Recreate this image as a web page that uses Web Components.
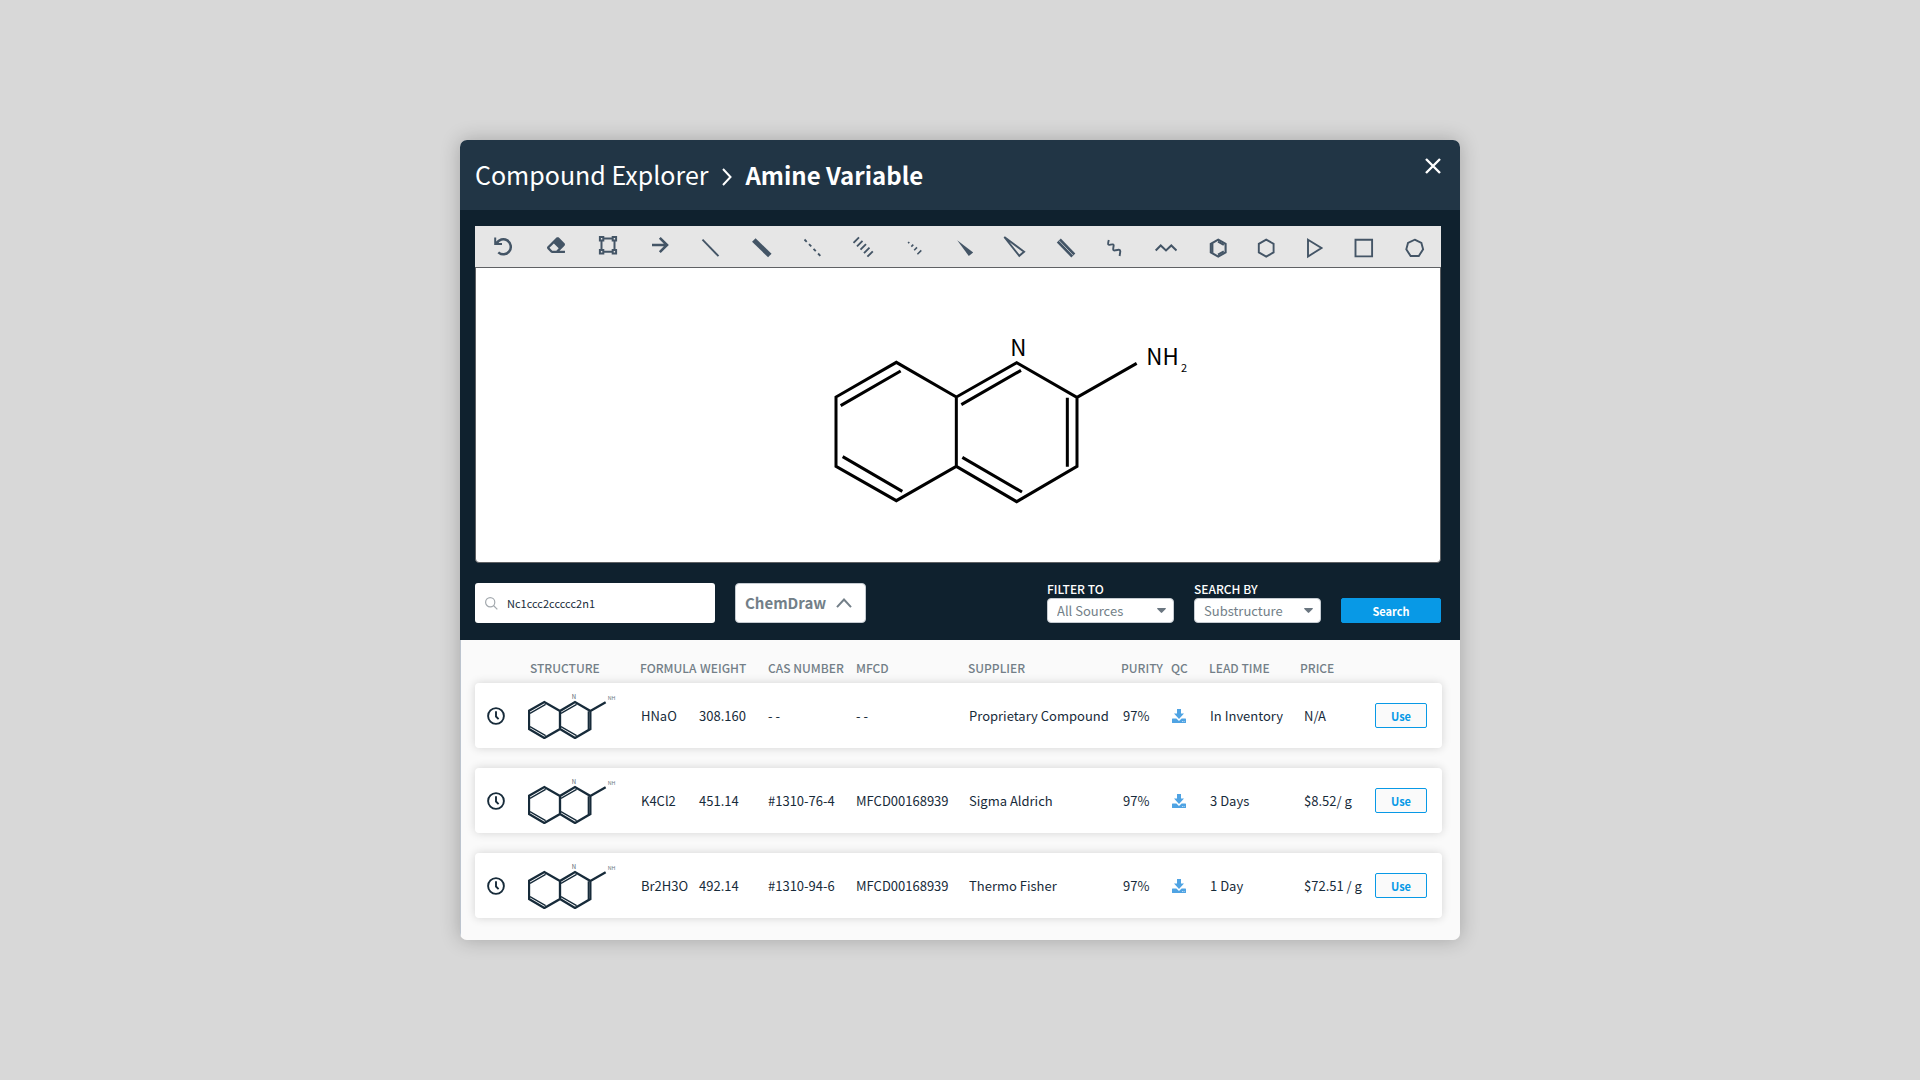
<!DOCTYPE html>
<html lang="en">
<head>
<meta charset="utf-8">
<title>Compound Explorer</title>
<style>
  body {
    margin: 0;
    min-height: 100vh;
    display: grid;
    place-items: center;
    background: #d8d8d8;
    color: #172b3a;
    font: 12px/16px "Noto Sans CJK SC", "Noto Sans", sans-serif;
    --navy: #0f212e;
    --slate: #213545;
    --grey: #737f88;
    --blue: #0899e6;
    --tool: #445566;
  }
</style>
</head>
<body>
<explorer-dialog>
  <dialog-header slot="header" section="Compound Explorer">Amine Variable</dialog-header>
  <molecule-editor slot="workspace"></molecule-editor>
  <search-bar slot="workspace">
    <structure-input value="Nc1ccc2ccccc2n1"></structure-input>
    <format-toggle>ChemDraw</format-toggle>
    <select-field slot="filters" label="FILTER TO" options="All Sources,In Inventory"></select-field>
    <select-field slot="filters" label="SEARCH BY" options="Substructure,Exact Match"></select-field>
    <action-button slot="filters" kind="solid">Search</action-button>
  </search-bar>
  <compound-results slot="results"></compound-results>
</explorer-dialog>

<script>
const define = (name, html, setup) => {
  const template = document.createElement('template');
  template.innerHTML = html;
  customElements.define(name, class extends HTMLElement {
    connectedCallback() {
      if (this.shadowRoot) return;
      const root = this.attachShadow({ mode: 'open' });
      root.append(template.content.cloneNode(true));
      if (setup) setup(this, root);
    }
  });
};

define('explorer-dialog', `
  <style>
    :host { display: block; width: min(1000px, calc(100% - 48px)); }
    .panel { border-radius: 7px; overflow: hidden; background: #fafafa; }
    .shade { border-radius: 7px; box-shadow: 0 0 20px rgba(0,0,0,.24); }
    main { background: var(--navy); padding: 16px 19px 17px 15px; display: grid; gap: 20px; }
  </style>
  <div class="shade"><div class="panel">
    <slot name="header"></slot>
    <main><slot name="workspace"></slot></main>
    <slot name="results"></slot>
  </div></div>`);

define('dialog-header', `
  <style>
    :host { display: block; background: var(--slate); color: #fff; }
    header { min-height: 70px; padding: 0 19px 2px 15px; box-sizing: border-box; display: flex; align-items: center; justify-content: space-between; }
    h1 { margin: 0; font-size: 25px; line-height: 36px; font-weight: 400; display: flex; align-items: baseline; gap: 13px; }
    h1 svg { align-self: center; padding: 6px 0 0 1px; }
    b { font-size: 24px; font-weight: 700; }
    button { all: unset; align-self: flex-start; padding-top: 18px; cursor: pointer; }
    svg { display: block; fill: none; stroke: #fff; stroke-width: 2; }
    button svg { stroke-width: 2.400; }
  </style>
  <header>
    <h1><span></span>
      <svg width="10" height="18" viewBox="0 0 10 18"><path d="M1 1l7.500 8-7.500 8"/></svg>
      <b><slot></slot></b></h1>
    <button aria-label="Close"><svg width="16" height="16" viewBox="0 0 16 16"><path d="M1 1l14 14M15 1L1 15"/></svg></button>
  </header>`, (host, root) => {
  root.querySelector('span').textContent = host.getAttribute('section');
});

const tools = [
  ['Undo', 20, '<path stroke-width="2" d="M1.200 1.600V8H8M1.500 7.800L4 5.500"/><path stroke-width="2.500" d="M2.600 7.400A7.500 7.500 0 1 1 4.300 16.400"/>'],
  ['Eraser', 19, '<path transform="scale(.03516)" fill="currentColor" stroke="none" d="M497.941 273.941c18.745-18.745 18.745-49.137 0-67.882l-160-160c-18.745-18.745-49.136-18.746-67.883 0l-256 256c-18.745 18.745-18.745 49.137 0 67.882l96 96A48.004 48.004 0 0 0 144 480h356c6.627 0 12-5.373 12-12v-40c0-6.627-5.373-12-12-12H355.883l142.058-142.059zm-302.627-62.627l137.373 137.373L265.373 416H150.628l-80-80 124.686-124.686z"/>'],
  ['Select', 20, '<path stroke-width="2" d="M5 2.500h8M5 15.700h8M2.500 5v8M15.500 5v8"/><path stroke-width="2" d="M.9 1.100h3.400v3.400H.9zM13.700 1.100h3.400v3.400h-3.400zM.9 14h3.400v3.400H.9zM13.700 14h3.400v3.400h-3.400z"/>'],
  ['Arrow', 17, '<path stroke-width="2.600" d="M0 9h14.500M7.800 1.800L15 9l-7.200 7.200"/>'],
  ['Single bond', 17, '<path d="M.5 3.700l16 16.500"/>'],
  ['Bold bond', 19, '<path stroke-width="5" d="M1.800 4l16 15.500"/>'],
  ['Dashed bond', 16, '<path stroke-dasharray="3.200 3.300" d="M.5 3.500l16.500 17"/>'],
  ['Hashed bond', 22, '<path d="M.5 6.800L6 1.300M4 10.300l5.500-5.500M7.500 13.700L13 8.200M11 17.200l5.500-5.500M14.400 20.700l5.400-5.400"/>'],
  ['Hashed wedge', 16, '<path stroke-width="1.600" d="M.1 7.200l1.200-1.200M3.300 10.600l2-2M6.200 14.200l2.800-2.800M9.400 18.300l3.900-3.900"/>'],
  ['Wedge bond', 13, '<path fill="currentColor" stroke="none" d="M.2 4.200l16 12.200-4.400 3.500z"/>'],
  ['Hollow wedge', 21, '<path stroke-width="1.900" d="M1.300 1l19.800 14.800-4.800 4z"/>'],
  ['Double bond', 17, '<path stroke-width="5.600" d="M1.800 4.500l14.500 15"/><path stroke="#b4bac0" stroke-width="1" d="M1.800 4.500l14.500 15"/>'],
  ['Wavy bond', 15, '<path d="M1.800 4C.4 9 1.200 9.300 3.500 8.700S7 8 6.600 10s-1.100 5 1.400 4.400 5.400-1.600 5.300 1.100L12.600 20"/>'],
  ['Chain', 22, '<path stroke-width="2" d="M.7 14.500l5-5 5.300 5 5.300-5 5.200 5"/>'],
  ['Benzene ring', 15, '<path stroke-width="2.100" d="M8.200 3.600l7.400 4.200v8.600l-7.400 4.200-7.400-4.200V7.800z"/><path stroke-width="2" d="M2.400 7.500v9.200M8 5.600l5.800 3.200M8 18.600l5.800-3.200"/>'],
  ['Hexagon', 16, '<path d="M8.200 3.600l7.400 4.200v8.600l-7.400 4.200-7.400-4.200V7.800z"/>'],
  ['Triangle', 14, '<path d="M1 3.700L14.500 12 1 20.500z"/>'],
  ['Square', 18, '<path d="M1.500 3.800h16.600v16.600H1.500z"/>'],
  ['Heptagon', 19, '<path d="M9.700 3.700l6.700 3.200 1.700 6.400-4.300 6.700H5.600L1.300 13.300 3 6.900z"/>']
];

define('tool-strip', `
  <style>
    :host { display: block; background: #e6e6e6; color: var(--tool); }
    nav { display: flex; justify-content: space-between; padding: 0 17px 0 19px; }
    button { all: unset; height: 41px; display: flex; align-items: center; cursor: pointer; }
    svg { display: block; overflow: visible; fill: none; stroke: currentColor; stroke-width: 1.900; }
  </style>
  <nav aria-label="Drawing tools"></nav>`, (host, root) => {
  root.querySelector('nav').innerHTML = tools.map(([name, width, art]) =>
    `<button aria-label="${name}"><svg width="${width}" height="21" viewBox="0 0 ${width} 21">${art}</svg></button>`).join('');
});

define('molecule-editor', `
  <style>
    :host { display: block; }
    .canvas { background: #fff; border: 1px solid #5f6164; border-radius: 0 0 4px 4px; }
    svg { display: block; width: 100%; fill: none; stroke: #000; stroke-width: 9; }
    text { fill: #000; stroke: none; font-size: 67px; }
    .sub { font-size: 33px; }
  </style>
  <tool-strip></tool-strip>
  <div class="canvas">
    <svg viewBox="-972 -156 2892 882" role="img" aria-label="Quinolin-2-amine structure">
      <path d="M469 231L289 127 108 231V439L289 542 469 439V231L650 128 831 232V439L650 545 469 439M831 232L1010 130"/>
      <path d="M122 257L302 153M128 410L307 514M484 254L663 151M487 412L666 516M802 233V440"/>
      <text x="631" y="109">N</text><text x="1039" y="135">NH</text><text class="sub" x="1143" y="156">2</text>
    </svg>
  </div>`);

define('search-bar', `
  <style>
    :host { display: flex; flex-wrap: wrap; justify-content: space-between; gap: 20px; }
    div { display: flex; gap: 20px; align-items: flex-end; }
  </style>
  <div><slot></slot></div>
  <div><slot name="filters"></slot></div>`);

define('structure-input', `
  <style>
    :host { display: block; width: 240px; }
    label { display: flex; align-items: center; gap: 9px; height: 40px; padding: 0 10px; box-sizing: border-box; background: #fff; border-radius: 3px; }
    svg { flex: none; fill: none; stroke: #a3a9ae; stroke-width: 1.200; }
    input { all: unset; flex: 1; min-width: 0; font-size: 11px; line-height: 16px; color: #172b3a; }
  </style>
  <label>
    <svg width="13" height="13" viewBox="0 0 13 13"><circle cx="5.200" cy="5.200" r="4.600"/><path d="M8.500 8.500l3.800 3.800"/></svg>
    <input type="text" aria-label="Structure">
  </label>`, (host, root) => {
  root.querySelector('input').value = host.getAttribute('value');
});

define('format-toggle', `
  <style>
    :host { display: block; }
    button { all: unset; box-sizing: border-box; height: 40px; min-width: 131px; padding: 0 13px 0 9px; display: flex; align-items: center; justify-content: space-between;
      background: #fff; border: 1px solid #c5cbd1; border-radius: 4px; color: var(--grey); font-size: 15px; line-height: 24px; font-weight: 700; cursor: pointer; }
    svg { fill: none; stroke: currentColor; stroke-width: 2; }
  </style>
  <button><slot></slot><svg width="16" height="10" viewBox="0 0 16 10"><path d="M1 9.200L8 1.500l7 7.700"/></svg></button>`);

define('select-field', `
  <style>
    :host { display: grid; width: 127px; }
    label { color: #fff; font-size: 12px; line-height: 11px; margin-bottom: 4px; font-weight: 500; }
    .box { display: grid; align-items: center; }
    .box > * { grid-area: 1 / 1; }
    select { appearance: none; width: 100%; height: 25px; margin: 0; padding: 0 24px 0 9px; box-sizing: border-box;
      background: #fff; border: 1px solid #c5cbd1; border-radius: 4px; color: var(--grey); font: inherit; font-size: 13px; line-height: 20px; }
    svg { justify-self: end; margin-right: 8px; pointer-events: none; fill: #6a7680; }
  </style>
  <label for="choice"></label>
  <div class="box"><select id="choice"></select>
    <svg width="9" height="5" viewBox="0 0 9 5"><path d="M.5 0h8q.6.3.2.9L5.200 4.600q-.7.700-1.400 0L.3.900Q-.1.300.5 0z"/></svg></div>`, (host, root) => {
  root.querySelector('label').textContent = host.getAttribute('label');
  for (const name of host.getAttribute('options').split(',')) root.querySelector('select').add(new Option(name));
});

define('action-button', `
  <style>
    :host { display: block; }
    button { all: unset; box-sizing: border-box; display: block; width: 52px; height: 25px; border: 1px solid var(--blue); border-radius: 2px;
      background: #fafafa; color: var(--blue); text-align: center; font-size: 11px; line-height: 24px; font-weight: 700; cursor: pointer; }
    :host([kind=solid]) button { width: 100px; background: var(--blue); color: #fff; }
  </style>
  <button><slot></slot></button>`);

define('molecule-thumb', `
  <style>
    :host { display: block; }
    svg { display: block; fill: none; stroke: #172b3a; stroke-width: 7; }
    .inner { stroke-width: 4; }
    text { fill: #55616b; stroke: none; font-size: 18px; }
    .amine { font-size: 16px; fill: #6b7780; }
  </style>
  <svg width="90" height="47" viewBox="204 126 270 141" role="img" aria-label="Structure">
    <path d="M300 183L253 156 207 182V237L253 264 300 237V183L345 156 391 183V237L345 264 300 237M391 183L437 157"/>
    <path class="inner" d="M210 190L257 163M210 230L257 257M303 190L350 163M303 230L350 257M385 184V238"/>
    <text x="335" y="147">N</text><text class="amine" x="443" y="151">NH</text>
  </svg>`);

const compounds = [
  ['HNaO', '308.160', '- -', '- -', 'Proprietary Compound', '97%', 'In Inventory', 'N/A'],
  ['K4Cl2', '451.14', '#1310-76-4', 'MFCD00168939', 'Sigma Aldrich', '97%', '3 Days', '$8.52/ g'],
  ['Br2H3O', '492.14', '#1310-94-6', 'MFCD00168939', 'Thermo Fisher', '97%', '1 Day', '$72.51 / g']
];

define('compound-results', `
  <style>
    :host { display: block; padding: 0 18px 22px 14px; border-left: 1px solid #bcc4ce; }
    table, thead { display: block; }
    tbody { display: grid; gap: 20px; }
    tr { display: grid; align-items: center;
      grid-template-columns: 53fr 112fr 59fr 69fr 88fr 112fr 153fr 50fr 38fr 91fr 75fr 67fr; }
    th, td { padding: 0; min-width: 0; white-space: nowrap; text-align: left; }
    thead tr { padding: 20px 0 7px; }
    th { color: var(--grey); font-size: 12px; line-height: 16px; font-weight: 500; }
    th:nth-child(2) { padding-left: 2px; }
    th:nth-child(4) { padding-left: 1px; }
    tbody tr { min-height: 65px; background: #fff; border-radius: 4px; box-shadow: 0 0 10px rgba(0,0,0,.16); }
    td { font-size: 13px; line-height: 18px; }
    td:first-child { padding-left: 12px; }
    td:nth-child(3), td:nth-child(7), td:nth-child(9), td:nth-child(10) { padding-left: 1px; }
    td:nth-child(8) { padding-left: 2px; }
    td:nth-child(11) { padding-left: 4px; }
    svg { display: block; }
    a { display: block; width: 14px; color: #4fa3e3; }
  </style>
  <table>
    <thead><tr><th></th><th>STRUCTURE</th><th>FORMULA</th><th>WEIGHT</th><th>CAS NUMBER</th><th>MFCD</th><th>SUPPLIER</th><th>PURITY</th><th>QC</th><th>LEAD TIME</th><th>PRICE</th><th></th></tr></thead>
    <tbody></tbody>
  </table>`, (host, root) => {
  const clock = '<svg width="18" height="18" viewBox="0 0 18 18" fill="none" stroke="#172b3a" stroke-width="1.900"><circle cx="9" cy="9" r="7.900"/><path d="M9 4.200v5.300l2.600 2.600"/></svg>';
  const download = '<a href="#qc" aria-label="Download QC report"><svg width="14" height="14" viewBox="0 0 14 14" fill="currentColor"><path d="M5 0h4v4.600h3L7 10 2 4.600h3z"/><path d="M.6 9.500h3.800L7 12l2.600-2.500h3.800q.6 0 .6.600v3.300q0 .6-.6.600H.6q-.6 0-.6-.6v-3.300q0-.6.600-.6zM10 12v.8h.8V12zm1.700 0v.8h.8V12z" fill-rule="evenodd"/></svg></a>';
  root.querySelector('tbody').innerHTML = compounds.map(c => {
    const cells = [clock, '<molecule-thumb></molecule-thumb>', ...c.slice(0, 6), download, c[6], c[7], '<action-button>Use</action-button>'];
    return `<tr>${cells.map(v => `<td>${v}</td>`).join('')}</tr>`;
  }).join('');
});
</script>
</body>
</html>
